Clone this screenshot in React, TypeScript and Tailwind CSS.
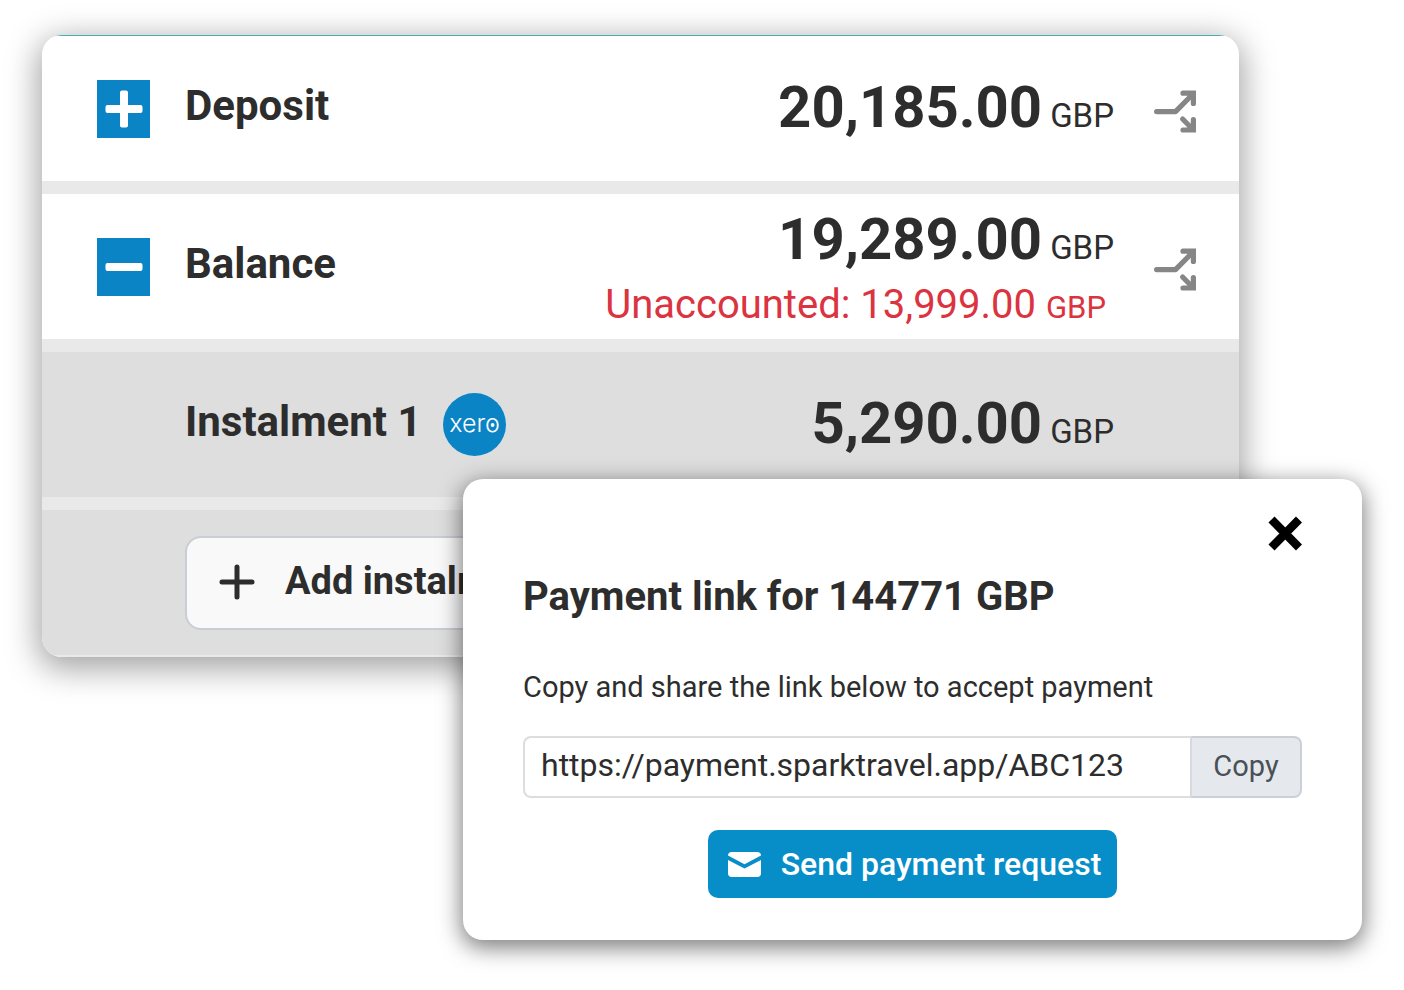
import { ReactNode } from "react"

const PlusIcon = () => (
  <svg viewBox="0 0 53 58" className="w-full h-full" aria-hidden="true">
    <rect x="8.5" y="25" width="37" height="8" rx="2" fill="white" />
    <rect x="23" y="10.5" width="8" height="37" rx="2" fill="white" />
  </svg>
)

const MinusIcon = () => (
  <svg viewBox="0 0 53 58" className="w-full h-full" aria-hidden="true">
    <rect x="8.5" y="25" width="37" height="8" rx="2" fill="white" />
  </svg>
)

const SplitIcon = () => (
  <svg
    viewBox="0 0 42 43"
    className="w-[42px] h-[43px]"
    fill="none"
    stroke="#868686"
    strokeWidth="5.2"
    strokeLinecap="round"
    aria-hidden="true"
  >
    <path d="M2.6 21.6H21.5L38 5" strokeLinejoin="round" />
    <path d="M29 3.2H39.4V13.5" />
    <path d="M28.6 29L38 38.5" />
    <path d="M29 40H39.4V29.5" />
    <path d="M31 3H40V12ZM31 40H40V31Z" fill="#868686" stroke="none" />
  </svg>
)

const XeroLogo = () => (
  <svg viewBox="0 0 63 63" className="w-[63px] h-[63px]" role="img" aria-label="xero">
    <circle cx="31.5" cy="31.5" r="31.5" fill="#0a84c5" />
    <text x="31.5" y="39" textAnchor="middle" className="font-[Inter,sans-serif] text-[25px] font-light" fill="white">
      xero
    </text>
    <circle cx="49.6" cy="32" r="1.9" fill="white" />
  </svg>
)

const Currency = () => <span className="text-[33px] leading-none">GBP</span>

type RowProps = {
  label: string
  amount: string
  expanded?: boolean
  toggle?: boolean
  note?: ReactNode
  badge?: ReactNode
}

const PaymentRow = ({ label, amount, expanded, toggle, note, badge }: RowProps) => {
  return (
    <li
      className={`flex items-center h-[145px] pl-[55px] pr-[43px] ${
        toggle ? "bg-white" : "bg-[#dedede]"
      }`}
    >
      <div className="w-[53px] h-[58px] mr-[35px] shrink-0">
        {toggle && (
          <button
            type="button"
            aria-label={`Toggle ${label}`}
            aria-expanded={!!expanded}
            className="block w-full h-full bg-[#0a84c5]"
          >
            {expanded ? <MinusIcon /> : <PlusIcon />}
          </button>
        )}
      </div>
      <h3 className="pb-[6px] text-[42px] leading-none font-bold whitespace-nowrap">{label}</h3>
      {badge && <div className="ml-[21px]">{badge}</div>}
      <div className="ml-auto text-right whitespace-nowrap">
        <p className="flex items-baseline justify-end gap-2 pb-1">
          <span className="text-[58px] leading-[72px] font-bold">{amount}</span>
          <Currency />
        </p>
        {note}
      </div>
      <div className="w-[42px] ml-10 pt-[6px] shrink-0">
        {toggle && (
          <button type="button" aria-label={`Split ${label}`} className="block">
            <SplitIcon />
          </button>
        )}
      </div>
    </li>
  )
}

const PaymentPlan = () => {
  return (
    <section className="ml-[42px] mr-[165px] rounded-[20px] overflow-hidden shadow-[0_8px_32px_4px_rgba(0,0,0,0.36)]">
      <ul className="flex flex-col gap-[13px] pb-[2px] border-t border-[#45b0b6] bg-[#e9e9e9]">
        <PaymentRow label="Deposit" amount="20,185.00" toggle />
        <PaymentRow
          label="Balance"
          amount="19,289.00"
          toggle
          expanded
          note={
            <p className="pr-2 text-[40px] leading-[52px] text-[#dc3340]">
              Unaccounted: 13,999.00 <span className="text-[31px] leading-none">GBP</span>
            </p>
          }
        />
        <PaymentRow label="Instalment 1" amount="5,290.00" badge={<XeroLogo />} />
        <li className="flex items-center h-[145px] pl-[143px] bg-[#dedede]">
          <button
            type="button"
            className="flex items-center h-[94px] pl-8 pr-10 pb-[2px] gap-[30px] rounded-[16px] border-2 border-[#c9cdd6] bg-[#f9f9f9] whitespace-nowrap"
          >
            <svg viewBox="0 0 36 36" className="w-9 h-9" stroke="#2d2d2d" strokeWidth="5" strokeLinecap="round" aria-hidden="true">
              <path d="M3 18H33M18 3V33" />
            </svg>
            <span className="pb-[2px] text-[38px] leading-none font-bold">Add instalment</span>
          </button>
        </li>
      </ul>
    </section>
  )
}

const PaymentLinkDialog = () => {
  return (
    <section
      role="dialog"
      aria-labelledby="link-title"
      className="relative -mt-[178px] ml-[463px] mr-[42px] pt-[37px] pb-[42px] px-[60px] rounded-[20px] bg-white shadow-[0_6px_22px_2px_rgba(0,0,0,0.5)]"
    >
      <button type="button" aria-label="Close" className="block ml-auto">
        <svg viewBox="0 0 35 35" className="w-[35px] h-[35px]" stroke="black" strokeWidth="8.5" aria-hidden="true">
          <path d="M4.5 3.5L32 31.5M32 3.5L4.5 31.5" />
        </svg>
      </button>
      <h2 id="link-title" className="mt-[22px] text-[40px] leading-[48px] font-bold">
        Payment link for 144771 GBP
      </h2>
      <label htmlFor="payment-link" className="block mt-[46px] text-[29px] leading-[40px]">
        Copy and share the link below to accept payment
      </label>
      <div className="flex mt-[29px] h-[62px]">
        <input
          id="payment-link"
          type="text"
          readOnly
          value="https://payment.sparktravel.app/ABC123"
          className="flex-1 min-w-0 pl-4 pb-1 border-2 border-r-0 border-[#dcdddf] rounded-l-[8px] text-[32px] bg-white outline-none"
        />
        <button
          type="button"
          className="w-[112px] border-2 border-[#c9d0d8] border-l-[#d6dade] rounded-r-[8px] bg-[#e5e8ed] text-[29px] text-[#495057]"
        >
          Copy
        </button>
      </div>
      <button
        type="button"
        className="flex items-center justify-center mx-auto mt-8 h-[68px] pl-5 pr-4 gap-5 rounded-[10px] bg-[#078ec9] text-white text-[32px] font-medium whitespace-nowrap"
      >
        <svg viewBox="0 0 33 25" className="w-[33px] h-[25px]" fill="white" aria-hidden="true">
          <path d="M3.5 0H29.5C31.5 0 33 1.3 33 3.6L16.5 12.3L0 3.6C0 1.3 1.5 0 3.5 0Z" />
          <path d="M0 8L16.5 16.5L33 8V21.5C33 23.5 31.5 25 29.5 25H3.5C1.5 25 0 23.5 0 21.5Z" />
        </svg>
        Send payment request
      </button>
    </section>
  )
}

const App = () => {
  return (
    <main className="pt-[35px] pb-[50px] bg-white text-[#2d2d2d] font-[Roboto,sans-serif]">
      <PaymentPlan />
      <PaymentLinkDialog />
    </main>
  )
}

export default App
